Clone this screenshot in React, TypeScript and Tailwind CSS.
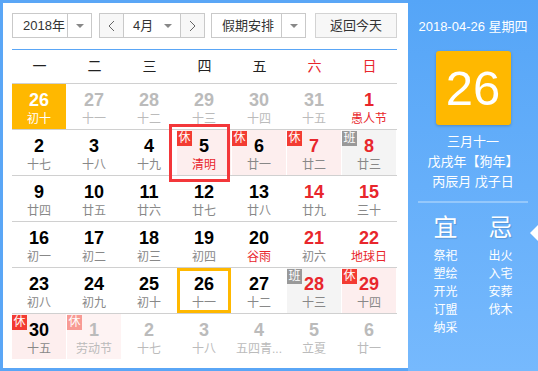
import React from 'react'

type Cell = {
    d: number
    l: string
    other?: boolean
    red?: boolean
    fest?: boolean
    badge?: '休' | '班'
    dim?: boolean
}

const weekdays = ['一', '二', '三', '四', '五', '六', '日']

const rows: Cell[][] = [
    [
        { d: 26, l: '初十', other: true },
        { d: 27, l: '十一', other: true },
        { d: 28, l: '十二', other: true },
        { d: 29, l: '十三', other: true },
        { d: 30, l: '十四', other: true },
        { d: 31, l: '十五', other: true },
        { d: 1, l: '愚人节', red: true, fest: true },
    ],
    [
        { d: 2, l: '十七' },
        { d: 3, l: '十八' },
        { d: 4, l: '十九' },
        { d: 5, l: '清明', fest: true, badge: '休' },
        { d: 6, l: '廿一', badge: '休' },
        { d: 7, l: '廿二', red: true, badge: '休' },
        { d: 8, l: '廿三', red: true, badge: '班' },
    ],
    [
        { d: 9, l: '廿四' },
        { d: 10, l: '廿五' },
        { d: 11, l: '廿六' },
        { d: 12, l: '廿七' },
        { d: 13, l: '廿八' },
        { d: 14, l: '廿九', red: true },
        { d: 15, l: '三十', red: true },
    ],
    [
        { d: 16, l: '初一' },
        { d: 17, l: '初二' },
        { d: 18, l: '初三' },
        { d: 19, l: '初四' },
        { d: 20, l: '谷雨', fest: true },
        { d: 21, l: '初六', red: true },
        { d: 22, l: '地球日', red: true, fest: true },
    ],
    [
        { d: 23, l: '初八' },
        { d: 24, l: '初九' },
        { d: 25, l: '初十' },
        { d: 26, l: '十一' },
        { d: 27, l: '十二' },
        { d: 28, l: '十三', red: true, badge: '班' },
        { d: 29, l: '十四', red: true, badge: '休' },
    ],
    [
        { d: 30, l: '十五', badge: '休' },
        { d: 1, l: '劳动节', other: true, badge: '休', dim: true },
        { d: 2, l: '十七', other: true },
        { d: 3, l: '十八', other: true },
        { d: 4, l: '五四青...', other: true },
        { d: 5, l: '立夏', other: true },
        { d: 6, l: '廿一', other: true },
    ],
]

const yi = ['祭祀', '塑绘', '开光', '订盟', '纳采']
const ji = ['出火', '入宅', '安葬', '伐木']

function Caret() {
    return <span className="block h-0 w-0 border-x-[4px] border-t-[4px] border-x-transparent border-t-[#888]" />
}

function Chevron({ dir }: { dir: 'l' | 'r' }) {
    return (
        <svg width="7" height="12" viewBox="0 0 7 12">
            <polyline
                points={dir === 'l' ? '6,1 1,6 6,11' : '1,1 6,6 1,11'}
                fill="none"
                stroke="#666"
                strokeWidth="1"
            />
        </svg>
    )
}

function DayCell({ c, sel, today, picked }: { c: Cell; sel?: boolean; today?: boolean; picked?: boolean }) {
    let bg = ''
    if (sel) bg = 'bg-[#ffb800]'
    else if (c.badge === '休') bg = c.dim ? 'bg-[#fef3f3]' : 'bg-[#fdeeee]'
    else if (c.badge === '班') bg = 'bg-[#f4f4f4]'

    const num = sel ? 'text-white' : c.other ? 'text-[#bbb]' : c.red ? 'text-[#e8262c]' : 'text-black'
    const lun = sel ? 'text-white' : c.other ? 'text-[#bbb]' : c.fest ? 'text-[#e8262c]' : 'text-[#888]'

    return (
        <div className="w-[55px] pr-[1px]">
            <div className={`relative flex h-[45px] flex-col items-center pt-[6px] ${bg}`}>
                {c.badge && (
                    <span
                        className={`absolute left-0 top-[1px] h-[15px] w-[15px] text-center text-[12px] leading-[15px] text-white ${
                            c.badge === '班' ? 'bg-[#999]' : c.dim ? 'bg-[#f89a94]' : 'bg-[#f33b32]'
                        }`}
                    >
                        {c.badge}
                    </span>
                )}
                <span className={`text-[18px] font-bold leading-[20px] ${num}`}>{c.d}</span>
                <span className={`whitespace-nowrap text-[12px] leading-[18px] ${lun}`}>{c.l}</span>
                {today && <span className="absolute inset-0 border-[3px] border-[#ffb800]" />}
                {picked && <span className="absolute left-[-8px] top-[-6px] z-10 h-[58px] w-[61px] border-[3px] border-[#f3373a]" />}
            </div>
        </div>
    )
}

export default function App() {
    return (
        <div className="flex h-[371px] w-[538px] font-['Liberation_Sans','Noto_Sans_CJK_SC',sans-serif]">
            <div className="bg-[#5aa6f6] py-[3px] pl-[3px]">
                <div className="h-[365px] w-[405px] bg-white pl-[9px] pt-[10px]">
                    {/* toolbar */}
                    <div className="flex h-[25px] text-[13px] text-[#333]">
                        <div className="flex w-[80px] border border-[#c9c9c9]">
                            <span className="flex-1 pl-[10px] leading-[23px]">2018年</span>
                            <span className="flex w-[24px] items-center justify-center border-l border-[#c9c9c9]">
                                <Caret />
                            </span>
                        </div>
                        <div className="ml-[7px] flex w-[106px] border border-[#c9c9c9]">
                            <span className="flex w-[23px] items-center justify-center bg-[#f7f7f7]">
                                <Chevron dir="l" />
                            </span>
                            <span className="flex flex-1 items-center border-x border-[#c9c9c9] pl-[9px] pr-[8px]">
                                <span className="flex-1 leading-[23px]">4月</span>
                                <Caret />
                            </span>
                            <span className="flex w-[23px] items-center justify-center bg-[#f7f7f7]">
                                <Chevron dir="r" />
                            </span>
                        </div>
                        <div className="ml-[6px] flex w-[95px] border border-[#c9c9c9]">
                            <span className="flex-1 pl-[10px] leading-[23px]">假期安排</span>
                            <span className="flex w-[24px] items-center justify-center border-l border-[#c9c9c9]">
                                <Caret />
                            </span>
                        </div>
                        <div className="ml-[9px] flex w-[82px] items-center justify-center border border-[#d3d3d3] bg-[#f7f7f7]">
                            返回今天
                        </div>
                    </div>

                    {/* grid */}
                    <div className="mt-[11px] w-[385px] border-t border-[#5aa6f6]">
                        <div className="flex h-[33px]">
                            {weekdays.map((w, i) => (
                                <div
                                    key={w}
                                    className={`flex w-[55px] items-center justify-center text-[14px] ${i >= 5 ? 'text-[#e8262c]' : 'text-[#222]'}`}
                                >
                                    {w}
                                </div>
                            ))}
                        </div>
                        {rows.map((r, ri) => (
                            <div key={ri} className={`flex ${ri < 5 ? 'border-y' : 'border-t'} border-[#d0d0d0] -mb-[1px]`}>
                                {r.map((c, ci) => (
                                    <DayCell
                                        key={ci}
                                        c={c}
                                        sel={ri === 0 && ci === 0}
                                        today={ri === 4 && ci === 3}
                                        picked={ri === 1 && ci === 3}
                                    />
                                ))}
                            </div>
                        ))}
                    </div>
                </div>
            </div>

            {/* right panel */}
            <div className="relative flex w-[130px] flex-col items-center bg-gradient-to-b from-[#55a5f7] to-[#76b9fd] pt-[18px] text-white">
                <div className="text-[13px] leading-[18px]">2018-04-26 星期四</div>
                <div className="mt-[15px] flex h-[74px] w-[75px] items-center justify-center rounded-[3px] bg-[#ffb800] text-[49px] leading-none shadow-[0_1px_3px_rgba(0,0,0,0.2)]">
                    26
                </div>
                <div className="mt-[7px] flex flex-col items-center text-[13px] leading-[20px]">
                    <span>三月十一</span>
                    <span>戊戌年【狗年】</span>
                    <span>丙辰月 戊子日</span>
                </div>
                <div className="mt-[9px] h-[2px] w-[110px] bg-white/30" />
                <div className="mt-[11px] grid w-[110px] grid-cols-2">
                    <div className="flex flex-col items-center">
                        <span className="text-[24px] leading-[28px] [text-shadow:1px_1px_1px_rgba(0,0,0,0.15)]">宜</span>
                        <div className="mt-[5px] flex flex-col items-center text-[12px] leading-[18px]">
                            {yi.map((t) => (
                                <span key={t}>{t}</span>
                            ))}
                        </div>
                    </div>
                    <div className="flex flex-col items-center">
                        <span className="text-[24px] leading-[28px] [text-shadow:1px_1px_1px_rgba(0,0,0,0.15)]">忌</span>
                        <div className="mt-[5px] flex flex-col items-center text-[12px] leading-[18px]">
                            {ji.map((t) => (
                                <span key={t}>{t}</span>
                            ))}
                        </div>
                    </div>
                </div>
                <span className="absolute right-0 top-[225px] h-0 w-0 border-y-[8px] border-r-[8px] border-y-transparent border-r-white" />
            </div>
        </div>
    )
}
